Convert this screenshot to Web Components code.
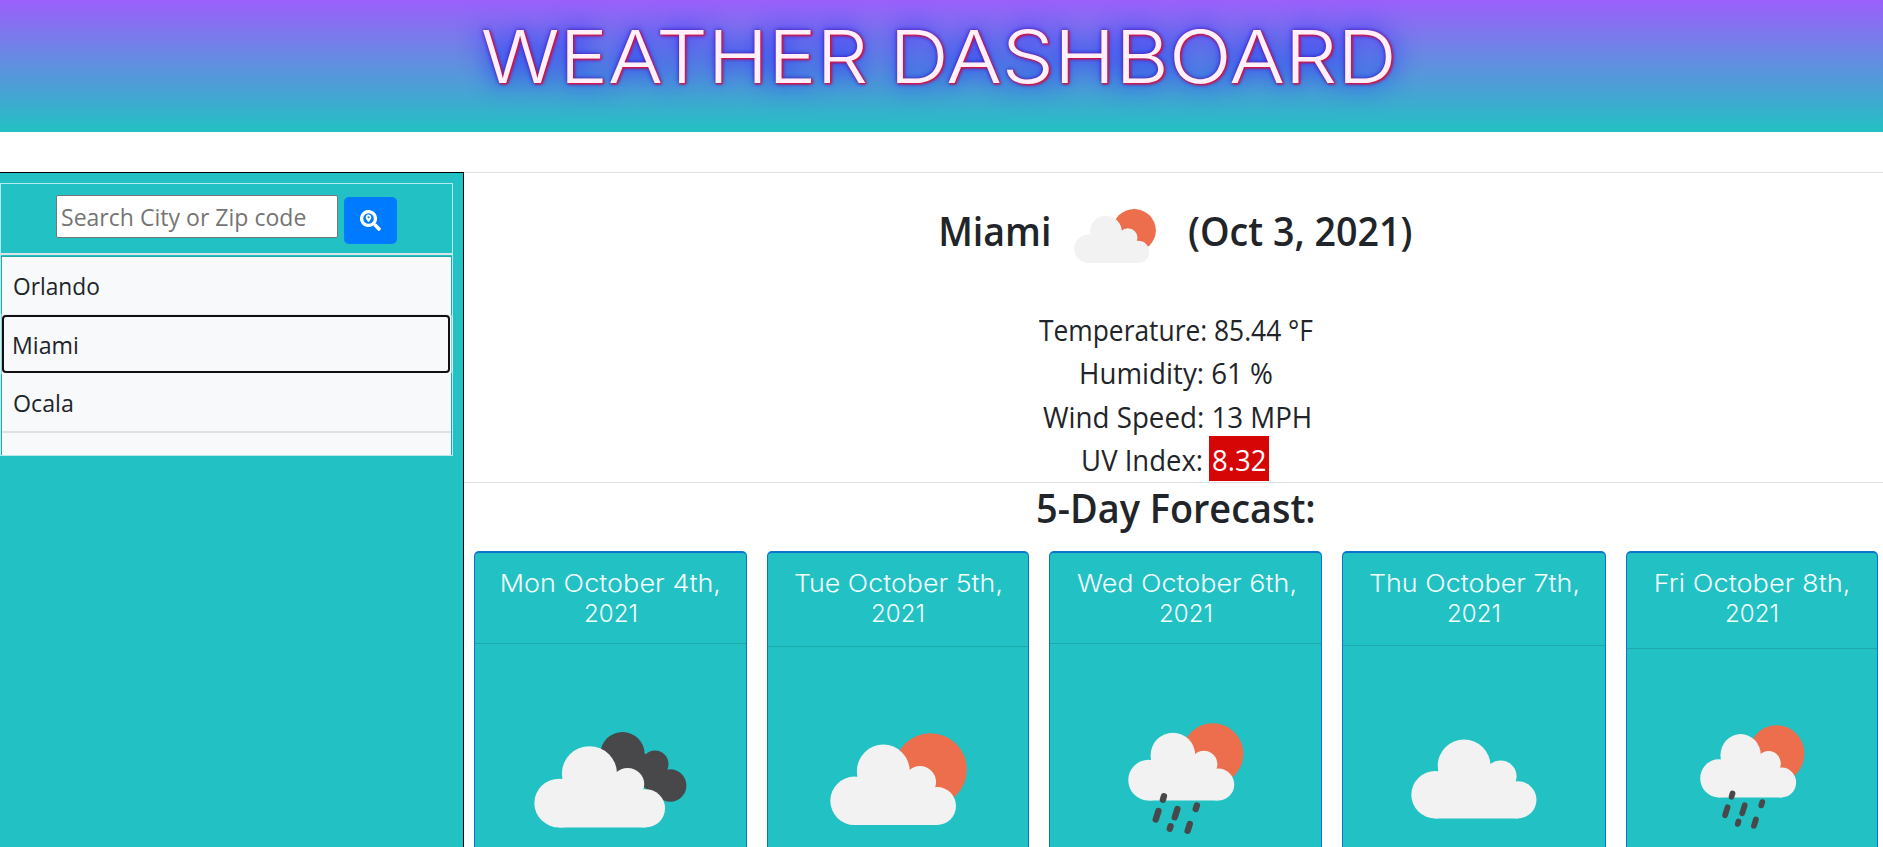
<!DOCTYPE html>
<html lang="en"><head><meta charset="utf-8"><title>Weather Dashboard</title>
<style>html,body{margin:0;height:100%;overflow:hidden;background:#fff}body{font-family:"Open Sans","Noto Sans",sans-serif;color:#212529}</style></head>
<body><weather-app></weather-app>
<script>
const define=(name,html,after)=>customElements.define(name,class extends HTMLElement{
  connectedCallback(){ if(this.shadowRoot)return; this.attachShadow({mode:'open'}).innerHTML=html(this); if(after)after(this); }
});

/* Text whose drawn width is fitted to the "w" attribute. */
const ctx=document.createElement('canvas').getContext('2d');
define('fit-text',()=>`<style>:host{display:inline-block;white-space:nowrap;text-align:left}span{display:inline-block;transform-origin:0 0}</style><span><slot></slot></span>`,el=>{
  const w=+el.getAttribute('w'),cs=getComputedStyle(el);
  ctx.font=`${cs.fontWeight} ${cs.fontSize} ${cs.fontFamily}`;
  const m=ctx.measureText(el.textContent),k=w/(m.actualBoundingBoxLeft+m.actualBoundingBoxRight);
  el.style.width=w+'px';
  el.shadowRoot.querySelector('span').style.transform=`translateX(${m.actualBoundingBoxLeft*k}px) scaleX(${k})`;
});

/* Weather pictures */
const cloud='<g fill="#f2f2f2"><circle cx="24.5" cy="67.8" r="24.2"/><ellipse cx="53.3" cy="38.5" rx="26.5" ry="27"/><circle cx="90" cy="49" r="16"/><circle cx="107" cy="73" r="19"/><path d="M24 92V60L40 40L78 38L96 55L107 72V92Z"/></g>';
const sun='<circle cx="100.5" cy="36.5" r="36.3" fill="#ec6e4c"/>';
const drop=(x,y,l)=>`<path d="M${x+l*.16} ${y-l*.5}L${x-l*.16} ${y+l*.5}" stroke="#48484a" stroke-width="7.5" stroke-linecap="round"/>`;
const art={
  sun:['0 0 137 92',sun+cloud],
  cloud:['0 11 126 81',cloud],
  clouds:['0 0 152.5 95.5','<g fill="#48484a"><circle cx="88.5" cy="22.2" r="22.2"/><circle cx="121" cy="32" r="13.5"/><circle cx="136.2" cy="53.5" r="16.2"/><path d="M80 35L105 20L122 25L136 45V66L120 62Z"/></g><g transform="translate(0 2.6) scale(1.04 1.01)">'+cloud+'</g>'],
  rain:['0 0 137 127',sun+cloud+drop(42,89,4)+drop(34.5,109.5,10)+drop(57,107,10)+drop(81,100,4)+drop(50,124,3)+drop(72,124,8)]
};
define('weather-icon',el=>{const a=art[el.getAttribute('type')];
  return `<style>:host{display:block;flex:none}svg{display:block;width:100%;height:100%;overflow:visible}</style><svg viewBox="${a[0]}" preserveAspectRatio="none">${a[1]}</svg>`});

define('page-header',()=>`<style>:host{display:flex;justify-content:center;height:132px;flex:none;background:linear-gradient(180deg,#9b5ffb,#22c1c3);padding-right:8px;box-sizing:border-box}
h1{margin:0;font:300 72.5px/114px Inter,sans-serif;color:#fff0fa;text-shadow:1px 1px 2px #e0103c,1px 1px 2px #c01850,0 0 25px #0000ff,0 0 5px #2b1fd0;display:flex;gap:30px}</style>
<h1><fit-text w="383">WEATHER</fit-text> <fit-text w="496">DASHBOARD</fit-text></h1>`);

define('city-item',()=>`<style>:host{display:block;height:58.7px;box-sizing:border-box;padding-left:12px;border-bottom:2px solid #dee2e6;background:#f8f9fa;font-size:23px;line-height:59px}
:host([active]){position:relative;border:2px solid #101010;border-radius:4px;box-shadow:0 0 0 3px rgba(248,249,250,.5);margin:-1px 1px 1px 0;padding-left:10px;line-height:56px}
:host([rest]){height:auto;flex:1;border-bottom:0}</style><slot></slot>`);

define('search-panel',()=>`<style>
:host{display:block;width:464px;box-sizing:border-box;background:#22c1c3;border-top:1px solid #000;border-right:1px solid #000;padding:10px 10px 0 0}
.card{height:273px;box-sizing:border-box;border:1px solid #b5e9ea;display:flex;flex-direction:column;width:453px}
.form{height:71px;display:flex;padding:11px 0 0 55px;gap:6px;box-sizing:border-box;align-items:flex-start;border-bottom:2px solid #dee2e6}
input{width:282px;height:43px;box-sizing:border-box;border:1px solid #767676;padding:1px 4px 0;font:23px "Open Sans",sans-serif;letter-spacing:.02px;border-radius:2px}
input::placeholder{color:#757575}
button{width:53px;height:47px;margin-top:2px;border:0;border-radius:5px;background:#007bff;padding:0;display:flex;align-items:center;justify-content:center}
.list{flex:1;display:flex;flex-direction:column;border:1px solid #22a9ac;border-bottom:0;background:#f8f9fa;margin-top:1px}
</style><div class="card"><div class="form"><input placeholder="Search City or Zip code"><button aria-label="Search">
<svg width="21" height="21" viewBox="0 0 512 512" fill="#fff"><path fill-rule="evenodd" d="M505 443 405 343c-4-4-11-7-17-7h-16a208 208 0 1 0-36 36v16c0 6 3 13 7 17l100 100c9 9 24 9 34 0l28-28c9-10 9-25 0-34ZM208 337a129 129 0 1 1 0-258 129 129 0 0 1 0 258Z"/><path fill-rule="evenodd" d="M208 112c-38 0-69 31-69 69 0 37 59 104 63 109 3 3 8 3 11 0 4-5 63-72 63-109 0-38-30-69-68-69Zm0 92a25 25 0 1 1 0-50 25 25 0 0 1 0 50Z"/></svg></button></div>
<div class="list"><city-item><fit-text w="85">Orlando</fit-text></city-item><city-item active><fit-text w="64">Miami</fit-text></city-item><city-item><fit-text w="58">Ocala</fit-text></city-item><city-item rest></city-item></div></div>`);

define('current-weather',()=>`<style>
:host{display:flex;flex-direction:column;height:310.5px;box-sizing:border-box;border:1px solid #dee2e6;border-width:1px 0;align-items:center;padding-left:5px}
h2{margin:35px 0 0;height:100.4px;font-size:39.5px;font-weight:600;line-height:47px;display:flex}
weather-icon{width:82px;height:54px;margin:1px 33px 0 25px}
.row{height:43.4px;line-height:43.4px;font-size:29px;display:flex;gap:8px;align-items:flex-start}
.badge{background:#d60606;color:#fff;height:45px;margin-top:-2px;padding:0 4px;line-height:47.4px}
</style><h2><fit-text w="108.5">Miami</fit-text><weather-icon type="sun"></weather-icon><fit-text w="222">(Oct 3, 2021)</fit-text></h2>
<div class="row"><fit-text w="274">Temperature: 85.44 °F</fit-text></div>
<div class="row"><fit-text w="191">Humidity: 61 %</fit-text></div>
<div class="row"><fit-text w="267">Wind Speed: 13 MPH</fit-text></div>
<div class="row"><fit-text w="118.5">UV Index:</fit-text><div class="badge"><fit-text w="52">8.32</fit-text></div></div>`);

define('forecast-card',el=>{const g=n=>el.getAttribute(n);return `<style>
:host{display:flex;flex-direction:column;background:#22c1c3;border:2px solid #0c74cf;border-width:2px 1.5px 0;border-radius:5px 5px 0 0;color:#f4ffff;box-sizing:border-box}
.head{height:${g('head')}px;box-sizing:border-box;border-bottom:1px solid rgba(0,0,0,.13);padding-top:16px;display:flex;flex-direction:column;align-items:center;font:300 24px/30px Inter,sans-serif}
.body{flex:1;display:flex;justify-content:center;align-items:flex-start}
weather-icon{width:${g('iw')}px;height:${g('ih')}px;margin-top:${g('iy')-553-g('head')}px}
</style><div class="head"><fit-text w="${g('dw')}">${g('day')}</fit-text><fit-text w="51.5">2021</fit-text></div><div class="body"><weather-icon type="${g('type')}"></weather-icon></div>`});

define('forecast-list',()=>`<style>
:host{display:block;height:364.5px}
h2{margin:0;height:68.5px;font-size:39.5px;font-weight:600;line-height:51px;text-align:center;padding-left:5px}
.cards{display:grid;grid-template-columns:273px 262px 273px 264px 252px;column-gap:20px;padding-left:10px;height:296px}
</style><h2><fit-text w="276">5-Day Forecast:</fit-text></h2><div class="cards">
<forecast-card day="Mon October 4th," dw="217" head="91" type="clouds" iw="152.5" ih="95.5" iy="732"></forecast-card>
<forecast-card day="Tue October 5th," dw="206" head="94" type="sun" iw="137" ih="92" iy="733"></forecast-card>
<forecast-card day="Wed October 6th," dw="218" head="91" type="rain" iw="115.5" ih="107" iy="723.3"></forecast-card>
<forecast-card day="Thu October 7th," dw="208" head="93" type="cloud" iw="125.5" ih="79.5" iy="739"></forecast-card>
<forecast-card day="Fri October 8th," dw="192.5" head="96" type="rain" iw="104.5" ih="100" iy="725.3"></forecast-card></div>`);

define('weather-app',()=>`<style>:host{display:flex;flex-direction:column;height:847px;gap:40px}
.main{display:grid;grid-template-columns:464px 1fr;height:675px}</style>
<page-header></page-header><div class="main"><search-panel></search-panel><div><current-weather></current-weather><forecast-list></forecast-list></div></div>`);
</script></body></html>
